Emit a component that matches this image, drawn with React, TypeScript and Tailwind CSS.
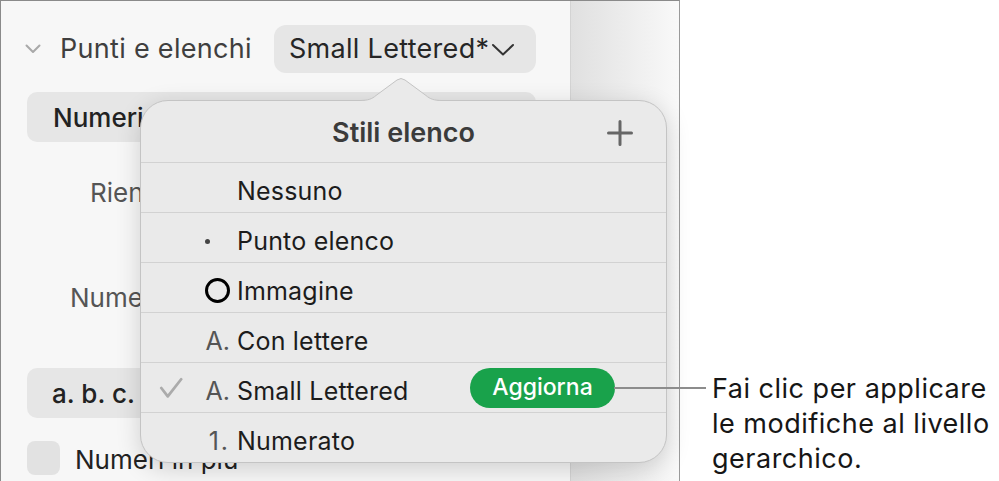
import React from "react";

function Row({
  check,
  marker,
  label,
  action,
}: {
  check?: boolean;
  marker?: React.ReactNode;
  label: string;
  action?: boolean;
}) {
  return (
    <div className="flex h-[50px] items-center border-t border-[#d2d2d2] pl-[18px] pr-[51px]">
      <div className="flex w-[24px] items-center justify-center">
        {check && (
          <svg width="26" height="24" viewBox="0 0 26 24">
            <polyline
              points="2.5,12 9.5,21 24,2.5"
              fill="none"
              stroke="#ababab"
              strokeWidth="3"
              strokeLinecap="round"
              strokeLinejoin="round"
            />
          </svg>
        )}
      </div>
      <div className="mt-[8px] flex w-[47px] items-center justify-end">{marker}</div>
      <div className="ml-[7px] mt-[8px] text-[25px] tracking-[0.2px] text-[#1c1c1c]">{label}</div>
      {action && (
        <div className="ml-auto flex h-[40px] w-[145px] items-center justify-center rounded-full bg-[#19a24b] text-[23px] font-medium text-white">
          Aggiorna
        </div>
      )}
    </div>
  );
}

export default function App() {
  return (
    <div className="relative flex h-[481px] w-[999px] overflow-hidden bg-white font-[Inter,sans-serif]">
      {/* app frame */}
      <div className="flex h-[481px] w-[680px] border-l border-r border-t border-l-[#8a8a8a] border-r-[#9a9a9a] border-t-[#8a8a8a]">
        {/* sidebar */}
        <div className="flex w-[570px] flex-col border-r border-[#d3d3d3] bg-[#f7f7f7] pl-[26px] pr-[34px]">
          <div className="mt-[24px] flex h-[48px] items-center">
            <svg className="-ml-[2px]" width="16" height="10" viewBox="0 0 16 10">
              <polyline
                points="1.5,1.5 8,8 14.5,1.5"
                fill="none"
                stroke="#a9a9a9"
                strokeWidth="2"
                strokeLinecap="round"
                strokeLinejoin="round"
              />
            </svg>
            <div className="ml-[19px] text-[27px] tracking-[0.3px] text-[#3f3f3f]">Punti e elenchi</div>
            <div className="ml-auto flex h-[48px] w-[262px] items-center rounded-[12px] bg-[#e6e6e6] pl-[15px]">
              <span className="text-[27px] tracking-[0.3px] text-[#262626]">Small Lettered*</span>
              <svg className="ml-[2px] mt-[2px]" width="24" height="14" viewBox="0 0 24 14">
                <polyline
                  points="2,2 12,11.5 22,2"
                  fill="none"
                  stroke="#333"
                  strokeWidth="2"
                  strokeLinecap="round"
                  strokeLinejoin="round"
                />
              </svg>
            </div>
          </div>
          <div className="mt-[19px] flex h-[50px] items-center rounded-[10px] bg-[#e6e6e6] pl-[26px] text-[26px] font-medium text-[#222]">
            Numeri e lettere
          </div>
          <div className="flex h-[100px] items-center pl-[63px] text-[26px] text-[#555]">Rientro</div>
          <div className="flex h-[110px] items-center pl-[43px] text-[26px] text-[#555]">Numerazione</div>
          <div className="mt-[16px] flex h-[50px] w-[300px] items-center rounded-[10px] bg-[#e6e6e6] pl-[25px] text-[26px] font-medium text-[#222]">
            a. b. c.
          </div>
          <div className="mt-[18px] flex items-center">
            <div className="h-[34px] w-[33px] rounded-[8px] bg-[#e2e2e2]" />
            <div className="ml-[15px] mt-[4px] text-[26px] text-[#222]">Numeri in più</div>
          </div>
        </div>
        {/* document edge */}
        <div className="flex-1 bg-gradient-to-r from-[#e0e0e0] to-[#f9f9f9]" />
      </div>

      {/* annotation text */}
      <div className="flex flex-1 flex-col pl-[32px] pt-[371px] text-[27px] leading-[35px] tracking-[0.5px] text-[#161616]">
        <div>Fai clic per applicare</div>
        <div>le modifiche al livello</div>
        <div>gerarchico.</div>
      </div>

      {/* popover */}
      <div className="absolute left-[140px] top-[100px] flex h-[363px] w-[527px] flex-col rounded-[28px] border border-[#c4c4c4] bg-[#eaeaea] shadow-[0_6px_24px_rgba(0,0,0,0.16)]">
        <div className="relative flex h-[61px] items-center justify-center">
          <span className="mt-[3px] text-[27px] font-semibold text-[#3b3b3b]">Stili elenco</span>
          <svg className="absolute right-[33px] top-[19px]" width="26" height="26" viewBox="0 0 26 26">
            <path d="M13 1.5V24.5M1.5 13H24.5" stroke="#666" strokeWidth="3" strokeLinecap="round" />
          </svg>
        </div>
        <Row label="Nessuno" />
        <Row
          label="Punto elenco"
          marker={<div className="mr-[20px] h-[5px] w-[5px] rounded-full bg-[#444]" />}
        />
        <Row
          label="Immagine"
          marker={<div className="-mt-[3px] h-[25px] w-[25px] rounded-full border-[3.5px] border-black" />}
        />
        <Row label="Con lettere" marker={<span className="text-[25px] text-[#555]">A.</span>} />
        <Row check action label="Small Lettered" marker={<span className="text-[25px] text-[#555]">A.</span>} />
        <Row label="Numerato" marker={<span className="text-[25px] tracking-[2px] text-[#555]">1.</span>} />
      </div>

      {/* popover arrow */}
      <svg className="absolute left-[360px] top-[76px]" width="82" height="28" viewBox="0 0 82 28">
        <path
          d="M0 24.5 C8 24.5 12 23 16 19.5 L37 4 Q41 1 45 4 L66 19.5 C70 23 74 24.5 82 24.5 L82 28 L0 28 Z"
          fill="#eaeaea"
        />
        <path
          d="M0 24.5 C8 24.5 12 23 16 19.5 L37 4 Q41 1 45 4 L66 19.5 C70 23 74 24.5 82 24.5"
          fill="none"
          stroke="#c4c4c4"
          strokeWidth="1"
        />
      </svg>

      {/* callout line */}
      <div className="absolute left-[614px] top-[387px] h-[2px] w-[92px] bg-[#8c8c8c]" />
    </div>
  );
}
